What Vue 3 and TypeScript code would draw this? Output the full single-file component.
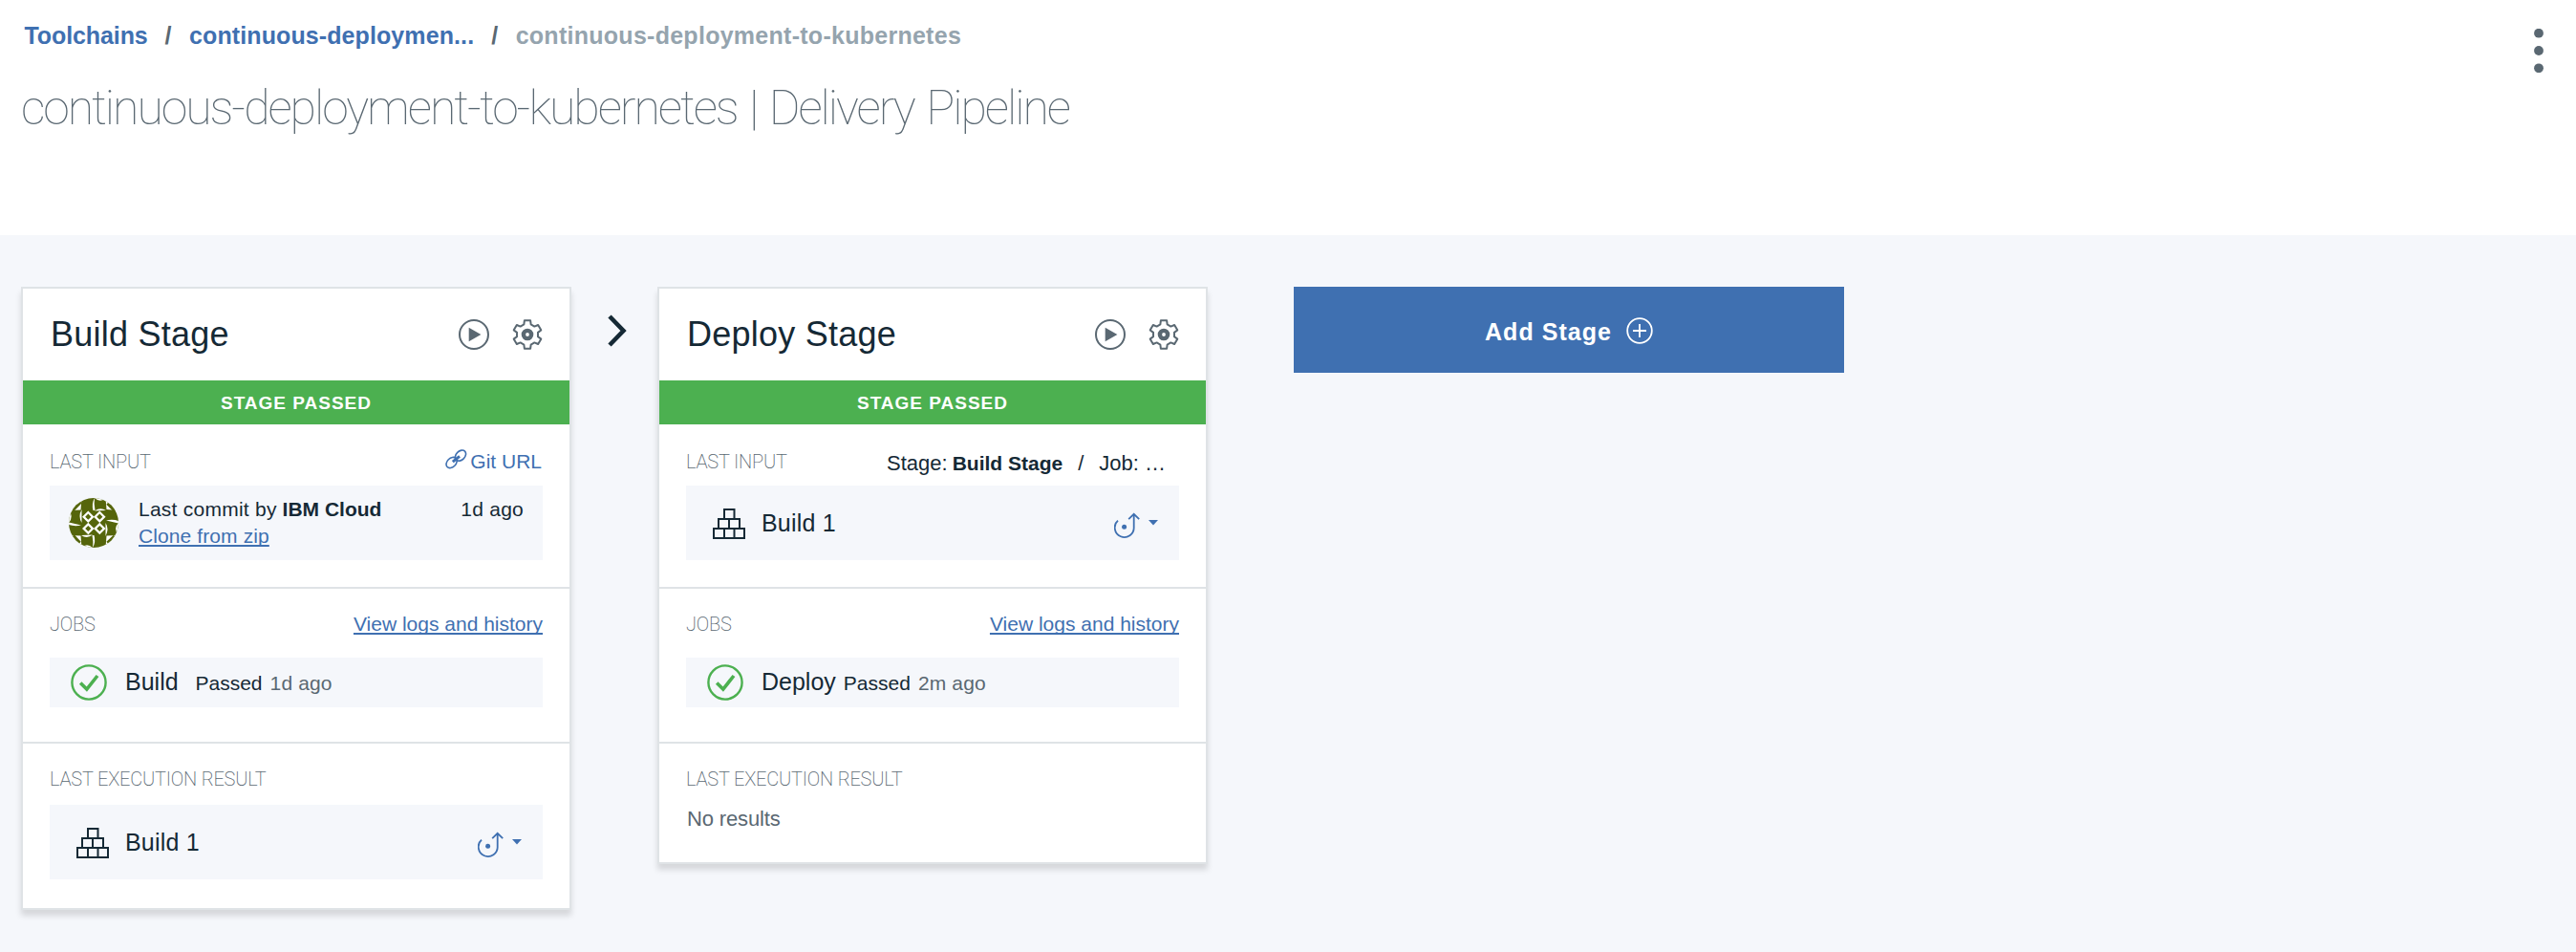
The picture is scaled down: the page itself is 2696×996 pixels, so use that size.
<script setup lang="ts">
interface Job {
  name: string
  status: string
  when: string
}
interface Stage {
  title: string
  input: 'commit' | 'build'
  job: Job
  result: string | null
}

const stages: Stage[] = [
  { title: 'Build Stage', input: 'commit', job: { name: 'Build', status: 'Passed', when: '1d ago' }, result: 'Build 1' },
  { title: 'Deploy Stage', input: 'build', job: { name: 'Deploy', status: 'Passed', when: '2m ago' }, result: null },
]

// Outline of a six-toothed gear centred on (16, 16)
const gearPath: string = (() => {
  const profile: [number, number][] = [[-19, 11.2], [-12, 15], [12, 15], [19, 11.2]]
  const points: string[] = []
  for (let tooth = 0; tooth < 6; tooth++) {
    for (const [offset, radius] of profile) {
      const angle = ((tooth * 60 + offset) * Math.PI) / 180
      points.push(`${(16 + radius * Math.sin(angle)).toFixed(2)} ${(16 - radius * Math.cos(angle)).toFixed(2)}`)
    }
  }
  return `M${points.join('L')}Z`
})()
</script>

<template>
  <div class="page">
    <header class="header">
      <div>
        <nav class="crumbs">
          <a class="crumb first">Toolchains</a>
          <span class="slash">/</span>
          <a class="crumb">continuous-deploymen...</a>
          <span class="slash">/</span>
          <span class="crumb current">continuous-deployment-to-kubernetes</span>
        </nav>
        <h1 class="title">continuous-deployment-to-kubernetes | Delivery Pipeline</h1>
      </div>
      <svg class="more" width="10" height="46" viewBox="0 0 10 46">
        <circle cx="5" cy="4.7" r="4.9" /><circle cx="5" cy="23" r="4.9" /><circle cx="5" cy="41.3" r="4.9" />
      </svg>
    </header>

    <main class="board">
      <template v-for="(stage, i) in stages" :key="stage.title">
        <div v-if="i > 0" class="connector">
          <svg width="22" height="36" viewBox="0 0 22 36"><path d="M3 3L17.5 18L3 33" /></svg>
        </div>
        <article class="card">
          <div class="head">
            <h2>{{ stage.title }}</h2>
            <div class="actions">
              <svg width="32" height="32" viewBox="0 0 32 32">
                <circle cx="16" cy="16" r="15" class="line" /><path d="M10.7 8.7L23.4 16L10.7 23.3Z" class="solid" />
              </svg>
              <svg width="32" height="32" viewBox="0 0 32 32">
                <path :d="gearPath" class="line" /><circle cx="16" cy="16" r="4.1" class="hub" />
              </svg>
            </div>
          </div>
          <div class="status">STAGE PASSED</div>

          <section class="section input">
            <div class="row">
              <span class="label">LAST INPUT</span>
              <a v-if="stage.input === 'commit'" class="git">
                <svg width="23" height="21" viewBox="0 0 23 21">
                  <ellipse cx="6.6" cy="14" rx="6.4" ry="4.6" transform="rotate(-45 6.6 14)" />
                  <ellipse cx="16" cy="6.6" rx="6.4" ry="4.6" transform="rotate(-45 16 6.6)" />
                  <path d="M7.8 13.2L15 7.4" class="bar" />
                </svg>
                <span>Git URL</span>
              </a>
              <div v-else class="source">
                <span>Stage:</span><b>Build Stage</b><span class="sep">/</span><span>Job: …</span>
              </div>
            </div>
            <div v-if="stage.input === 'commit'" class="item commit">
              <svg class="avatar" width="52" height="52" viewBox="0 0 52 52">
                <defs><clipPath id="avatar-disc"><circle cx="26" cy="26" r="26" /></clipPath></defs>
                <g clip-path="url(#avatar-disc)">
                  <rect width="52" height="52" fill="#55650b" />
                  <path
                    fill="#fff"
                    d="M0 0H13.5L12.5 12.5L0 13ZM52 0H38.5L39.5 12L52 13ZM0 52V39L12.5 39.5L13.5 52ZM52 52V39L39.5 39.5L38.5 52Z
                    M0 13Q5.5 19 0 26ZM13.5 12Q9.5 19 13.5 26ZM52 26Q46 32 52 39ZM38.5 26Q42.5 32 38.5 40Z
                    M27 0Q33 5.5 39 0ZM27 13.5Q33 9.5 39 13ZM13 52Q19 46.5 25 52ZM13 39Q19 43 25 38.5Z
                    M0 25.5L13 28.5Q6 30 0 28ZM52 26.5L39 23.5Q46 22 52 24ZM27 0Q23.5 6 25.5 13H27.5Q26 6 27 0ZM25 52Q28.5 46 26.5 39H24.5Q26 46 25 52Z"
                  />
                  <path stroke="#55650b" stroke-width="3.4" d="M12.5 4L4 12.8M40.5 5.5L48.5 13.5M4.5 39.5L11.5 47M40.5 47L48 40" />
                  <path fill="#fff" d="M20.3 13.4L26.6 19.7L20.3 26L14 19.7ZM32.3 13.4L38.6 19.7L32.3 26L26 19.7ZM20.3 25.7L26.6 32L20.3 38.3L14 32ZM32.3 25.7L38.6 32L32.3 38.3L26 32Z" />
                  <path fill="#55650b" d="M20.3 16.6L23.4 19.7L20.3 22.8L17.2 19.7ZM32.3 16.6L35.4 19.7L32.3 22.8L29.2 19.7ZM20.3 28.9L23.4 32L20.3 35.1L17.2 32ZM32.3 28.9L35.4 32L32.3 35.1L29.2 32Z" />
                </g>
              </svg>
              <div class="message">
                <div><span class="by">Last commit by</span> <b>IBM Cloud</b></div>
                <a class="link wide">Clone from zip</a>
              </div>
              <span class="ago">1d ago</span>
            </div>
            <div v-else class="item artifact">
              <svg class="boxes" width="34" height="32" viewBox="0 0 34 32">
                <path d="M12 11V1H22.5V11M6 21V11H28V21M17 11V21M1 21H33V31H1ZM12 21V31M22.5 21V31" />
              </svg>
              <span class="name">Build 1</span>
              <svg class="deploy" width="46" height="32" viewBox="0 0 46 32">
                <path d="M4 12.6A10 10 0 1 0 20.7 19.5V6M15.2 11.2L20.7 5.8L26.2 11.2" />
                <circle cx="10.6" cy="19.3" r="2.5" /><polygon points="36,12 46,12 41,17.6" />
              </svg>
            </div>
          </section>

          <section class="section jobs">
            <div class="row">
              <span class="label">JOBS</span>
              <a class="link">View logs and history</a>
            </div>
            <div class="item job">
              <svg width="38" height="38" viewBox="0 0 38 38">
                <circle cx="19" cy="19" r="17.6" /><path d="M10.2 19.5L16.8 26L28 12" />
              </svg>
              <div class="facts">
                <span class="name">{{ stage.job.name }}</span><span>{{ stage.job.status }}</span><span class="when">{{ stage.job.when }}</span>
              </div>
            </div>
          </section>

          <section class="section result">
            <div class="row"><span class="label">LAST EXECUTION RESULT</span></div>
            <div v-if="stage.result" class="item artifact">
              <svg class="boxes" width="34" height="32" viewBox="0 0 34 32">
                <path d="M12 11V1H22.5V11M6 21V11H28V21M17 11V21M1 21H33V31H1ZM12 21V31M22.5 21V31" />
              </svg>
              <span class="name">{{ stage.result }}</span>
              <svg class="deploy" width="46" height="32" viewBox="0 0 46 32">
                <path d="M4 12.6A10 10 0 1 0 20.7 19.5V6M15.2 11.2L20.7 5.8L26.2 11.2" />
                <circle cx="10.6" cy="19.3" r="2.5" /><polygon points="36,12 46,12 41,17.6" />
              </svg>
            </div>
            <p v-else class="none">No results</p>
          </section>
        </article>
      </template>

      <button class="add" type="button">
        <span>Add Stage</span>
        <svg width="28" height="28" viewBox="0 0 28 28"><circle cx="14" cy="14" r="12.8" /><path d="M14 7V21M7 14H21" /></svg>
      </button>
    </main>
  </div>
</template>

<style>
body {
  margin: 0;
  background: #f5f7fb;
}
</style>

<style scoped>
.page {
  height: 996px;
  overflow: hidden;
  background: #f5f7fb;
  color: #152935;
  font-family: "Liberation Sans", Arial, sans-serif;
  font-size: 21px;
}
.page *,
.page {
  box-sizing: border-box;
}
svg {
  display: block;
  flex: none;
}
.header {
  display: flex;
  justify-content: space-between;
  height: 246px;
  padding: 22px 34px 0 22px;
  background: #fff;
}
.crumbs {
  display: flex;
  padding-left: 3.5px;
  font-size: 25px;
  line-height: 30px;
  font-weight: bold;
}
.crumb {
  color: #3f70b1;
  letter-spacing: 0.1px;
}
.crumb.first {
  letter-spacing: -0.1px;
}
.crumb.current {
  color: #95a4ae;
  letter-spacing: 0.27px;
}
.slash {
  margin: 0 18.5px 0 18px;
  color: #5a6872;
}
.title {
  margin: 31px 0 0;
  color: #5a6872;
  font: 100 50px/60px Roboto, sans-serif;
  letter-spacing: -2.05px;
  word-spacing: 2.7px;
  white-space: nowrap;
}
.more {
  margin-top: 8px;
  fill: #5a6872;
}
.board {
  display: flex;
  align-items: flex-start;
  padding: 54px 22px 0;
}
.connector {
  width: 90px;
  padding: 28px 0 0 37px;
}
.connector path {
  fill: none;
  stroke: #152935;
  stroke-width: 4.6;
}
.card {
  width: 576px;
  background: #fff;
  border: 2px solid #dfe3e6;
  box-shadow: 0 6px 6px rgba(0, 0, 0, 0.13);
}
.head {
  display: flex;
  align-items: center;
  justify-content: space-between;
  height: 96px;
  padding: 0 28px 0 29px;
}
h2 {
  margin: 0;
  padding-bottom: 1px;
  font-size: 36px;
  line-height: 44px;
  font-weight: normal;
  letter-spacing: 0.25px;
}
.actions {
  display: flex;
  gap: 24px;
}
.line {
  fill: none;
  stroke: #5a6872;
  stroke-width: 2;
  stroke-linejoin: round;
}
.solid {
  fill: #5a6872;
}
.hub {
  fill: none;
  stroke: #5a6872;
  stroke-width: 4.4;
}
.status {
  height: 46px;
  background: #4cb050;
  color: #fff;
  font-size: 19px;
  line-height: 48px;
  font-weight: bold;
  letter-spacing: 1px;
  text-align: center;
}
.section {
  padding: 17px 28px 0;
}
.section + .section {
  border-top: 2px solid #dfe3e6;
}
.row {
  display: flex;
  align-items: center;
  justify-content: space-between;
  height: 40px;
}
.input {
  height: 170px;
  padding-top: 19px;
}
.input .row {
  margin-bottom: 5px;
}
.jobs {
  padding-bottom: 36px;
}
.jobs .row {
  margin-bottom: 15px;
}
.result {
  padding-bottom: 30px;
}
.result .row {
  margin-bottom: 7px;
}
.label {
  color: #5a6872;
  font: 200 20px/24px Roboto, sans-serif;
  letter-spacing: -0.2px;
}
.git {
  display: flex;
  align-items: center;
  gap: 3px;
  padding-right: 1px;
  color: #3f70b1;
}
.git svg {
  margin-bottom: 6px;
  fill: none;
  stroke: #3f70b1;
  stroke-width: 1.6;
}
.git .bar {
  stroke-width: 3;
}
.source {
  display: flex;
  align-items: baseline;
  padding: 3px 14px 0 0;
  font-size: 22px;
}
.source b {
  margin-left: 5px;
  font-size: 21px;
}
.sep {
  margin: 0 16px;
}
.item {
  display: flex;
  align-items: center;
  height: 78px;
  background: #f5f7fb;
}
.commit {
  padding: 0 20px;
}
.message {
  flex: 1;
  margin-left: 21px;
  line-height: 28px;
}
.by,
.ago {
  letter-spacing: 0.25px;
}
.ago {
  align-self: flex-start;
  margin-top: 11px;
  line-height: 28px;
}
.link {
  color: #3f70b1;
  text-decoration: underline 2px;
  text-underline-offset: 2px;
  text-decoration-skip-ink: none;
}
.wide {
  letter-spacing: 0.1px;
}
.artifact {
  padding: 0 22px 0 28px;
}
.artifact svg {
  margin-top: 2px;
}
.boxes {
  fill: none;
  stroke: #152935;
  stroke-width: 2;
}
.artifact .name {
  flex: 1;
  margin-left: 17px;
}
.name {
  font-size: 25px;
  letter-spacing: 0.2px;
}
.deploy path {
  fill: none;
  stroke: #3f70b1;
  stroke-width: 1.8;
}
.deploy {
  fill: #3f70b1;
}
.job {
  height: 52px;
  padding-left: 21.5px;
}
.job svg {
  fill: none;
  stroke: #4cb050;
  stroke-width: 2.4;
}
.job svg path {
  stroke-width: 3.6;
}
.facts {
  display: flex;
  align-items: baseline;
  gap: 8px;
  margin: -1px 0 0 19.5px;
}
.job .name {
  min-width: 65.5px;
  letter-spacing: 0;
}
.when {
  color: #5a6872;
  letter-spacing: 0.15px;
}
.none {
  margin: 0 0 1px;
  padding: 1px 0 0 1px;
  color: #5a6872;
  font-size: 22px;
  line-height: 28px;
  letter-spacing: -0.15px;
}
.add {
  display: flex;
  align-items: center;
  justify-content: center;
  gap: 15px;
  width: 576px;
  height: 90px;
  margin-left: 90px;
  padding: 2px 0 0;
  border: 0;
  background: #3f70b1;
  color: #fff;
  font: bold 25px/30px "Liberation Sans", Arial, sans-serif;
  letter-spacing: 1.05px;
}
.add span {
  padding-top: 2px;
}
.add svg {
  fill: none;
  stroke: #fff;
  stroke-width: 1.8;
}
</style>
